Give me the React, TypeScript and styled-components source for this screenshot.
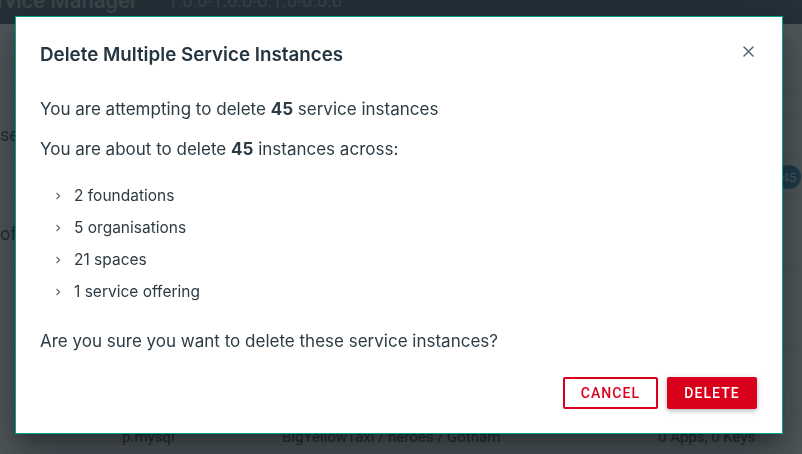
import styled, { createGlobalStyle } from "styled-components";

const GlobalStyle = createGlobalStyle`
  html, body {
    margin: 0;
    padding: 0;
    width: 802px;
    height: 454px;
    overflow: hidden;
    font-family: Inter, "Noto Sans", sans-serif;
  }
`;

const summary = ["2 foundations", "5 organisations", "21 spaces", "1 service offering"];

const Chevron = () => (
  <svg width="6" height="8" viewBox="0 0 6 8">
    <path d="M1.5 1 L4.5 4 L1.5 7" fill="none" stroke="#5f6e76" strokeWidth="1.2" />
  </svg>
);

const CloseIcon = () => (
  <svg width="11" height="11" viewBox="0 0 11 11">
    <path d="M1 1 L10 10 M10 1 L1 10" stroke="#566770" strokeWidth="1.5" strokeLinecap="round" />
  </svg>
);

export default function App() {
  return (
    <>
      <GlobalStyle />
      <Page>
        <TopBar>
          <AppName>Service Manager</AppName>
          <Version>1.0.0-1.0.0-0.1.0-0.0.0</Version>
        </TopBar>
        <Rows>
          <Row $h={19} />
          <Row $h={52} />
          <Row $h={20} />
          <Row $h={40}>
            <Cell>se</Cell>
          </Row>
          <Row $h={45}>
            <Badge>45</Badge>
          </Row>
          <Row $h={68}>
            <Cell>of</Cell>
          </Row>
          <Row $h={78} />
          <Row $h={66} />
          <LastRow>
            <Cell $w={282} $pl={122}>p.mysql</Cell>
            <Cell $w={376}>BigYellowTaxi / heroes / Gotham</Cell>
            <Cell>0 Apps, 0 Keys</Cell>
          </LastRow>
        </Rows>
      </Page>
      <Overlay>
        <Dialog>
          <Header>
            <Title>Delete Multiple Service Instances</Title>
            <CloseButton aria-label="Close">
              <CloseIcon />
            </CloseButton>
          </Header>
          <Body>
            <Line>
              You are attempting to delete <b>45</b> service instances
            </Line>
            <Line>
              You are about to delete <b>45</b> instances across:
            </Line>
            <List>
              {summary.map((s) => (
                <Item key={s}>
                  <ChevronBox>
                    <Chevron />
                  </ChevronBox>
                  {s}
                </Item>
              ))}
            </List>
            <Line>Are you sure you want to delete these service instances?</Line>
          </Body>
          <Actions>
            <Button $variant="outline" $w={95}>CANCEL</Button>
            <Button $variant="solid" $w={90}>DELETE</Button>
          </Actions>
        </Dialog>
      </Overlay>
    </>
  );
}

const Page = styled.div`
  width: 802px;
  height: 454px;
  background: #f3f4f5;
  display: flex;
  flex-direction: column;
  font-family: Roboto, "Noto Sans", sans-serif;
`;

const TopBar = styled.div`
  height: 24px;
  background: #34495a;
  display: flex;
  align-items: flex-start;
  gap: 30px;
  overflow: hidden;
  flex-shrink: 0;
`;

const AppName = styled.span`
  margin-top: -12px;
  margin-left: -28px;
  font-size: 22px;
  font-weight: 500;
  color: #9aa5ab;
`;

const Version = styled.span`
  margin-top: -10px;
  font-size: 18px;
  color: #8a959b;
`;

const Rows = styled.div`
  display: flex;
  flex-direction: column;
  flex: 1;
`;

const Row = styled.div<{ $h: number }>`
  height: ${({ $h }) => $h}px;
  box-sizing: border-box;
  border-bottom: 1px solid #dfe2e4;
  display: flex;
  align-items: center;
  justify-content: space-between;
  font-size: 18px;
  color: #2f3f48;
  flex-shrink: 0;
`;

const LastRow = styled.div`
  flex: 1;
  display: flex;
  align-items: center;
  padding-top: 8px;
  font-size: 15px;
  color: #2f3f48;
`;

const Cell = styled.span<{ $w?: number; $pl?: number }>`
  width: ${({ $w }) => ($w ? `${$w}px` : "auto")};
  padding-left: ${({ $pl }) => $pl ?? 0}px;
  box-sizing: border-box;
`;

const Badge = styled.span`
  margin-left: auto;
  margin-right: 1px;
  width: 24px;
  height: 24px;
  border-radius: 50%;
  background: #1f77b4;
  color: #e6f0f7;
  font-size: 13px;
  display: flex;
  align-items: center;
  justify-content: center;
`;

const Overlay = styled.div`
  position: fixed;
  inset: 0;
  background: rgba(33, 43, 49, 0.78);
`;

const Dialog = styled.div`
  position: absolute;
  left: 15px;
  top: 16px;
  width: 768px;
  height: 418px;
  box-sizing: border-box;
  background: #ffffff;
  border: 1px solid #00a38a;
  box-shadow: 0 11px 15px -7px rgba(0, 0, 0, 0.3), 0 24px 38px 3px rgba(0, 0, 0, 0.2),
    0 9px 46px 8px rgba(0, 0, 0, 0.16);
  padding: 24px;
  display: flex;
  flex-direction: column;
  color: #2c3b44;
`;

const Header = styled.div`
  display: flex;
  align-items: center;
  justify-content: space-between;
  height: 26px;
  margin-bottom: 31px;
`;

const Title = styled.h2`
  margin: 0;
  font-size: 18.8px;
  font-weight: 600;
  color: #263640;
`;

const CloseButton = styled.button`
  border: none;
  background: none;
  padding: 0;
  margin: 0 4px 6px 0;
  width: 12px;
  height: 12px;
  display: flex;
  align-items: center;
  justify-content: center;
  cursor: pointer;
`;

const Body = styled.div`
  display: flex;
  flex-direction: column;
`;

const Line = styled.p`
  margin: 0 0 18px 0;
  font-size: 17px;
  line-height: 22px;
  color: #2c3b44;

  b {
    font-weight: 700;
  }
`;

const List = styled.ul`
  list-style: none;
  margin: 7px 0 27px 0;
  padding: 0;
  display: flex;
  flex-direction: column;
  gap: 10px;
`;

const Item = styled.li`
  display: flex;
  align-items: center;
  font-size: 15.5px;
  line-height: 22px;
  color: #2c3b44;
`;

const ChevronBox = styled.span`
  width: 19px;
  padding-left: 15px;
  display: flex;
  align-items: center;
`;

const Actions = styled.div`
  margin-top: auto;
  display: flex;
  justify-content: flex-end;
  gap: 9px;
  padding-right: 1px;
`;

const Button = styled.button<{ $variant: "outline" | "solid"; $w: number }>`
  height: 32px;
  width: ${({ $w }) => $w}px;
  padding: 0;
  box-sizing: border-box;
  font-family: Roboto, "Noto Sans", sans-serif;
  font-size: 14px;
  font-weight: 500;
  letter-spacing: 1.1px;
  border-radius: 2px;
  cursor: pointer;
  border: 2px solid #d9001b;
  color: ${({ $variant }) => ($variant === "solid" ? "#ffffff" : "#d9001b")};
  background: ${({ $variant }) => ($variant === "solid" ? "#d9001b" : "#ffffff")};
  box-shadow: ${({ $variant }) =>
    $variant === "solid" ? "0 2px 4px rgba(0,0,0,0.2), 0 1px 8px rgba(0,0,0,0.1)" : "none"};
`;
